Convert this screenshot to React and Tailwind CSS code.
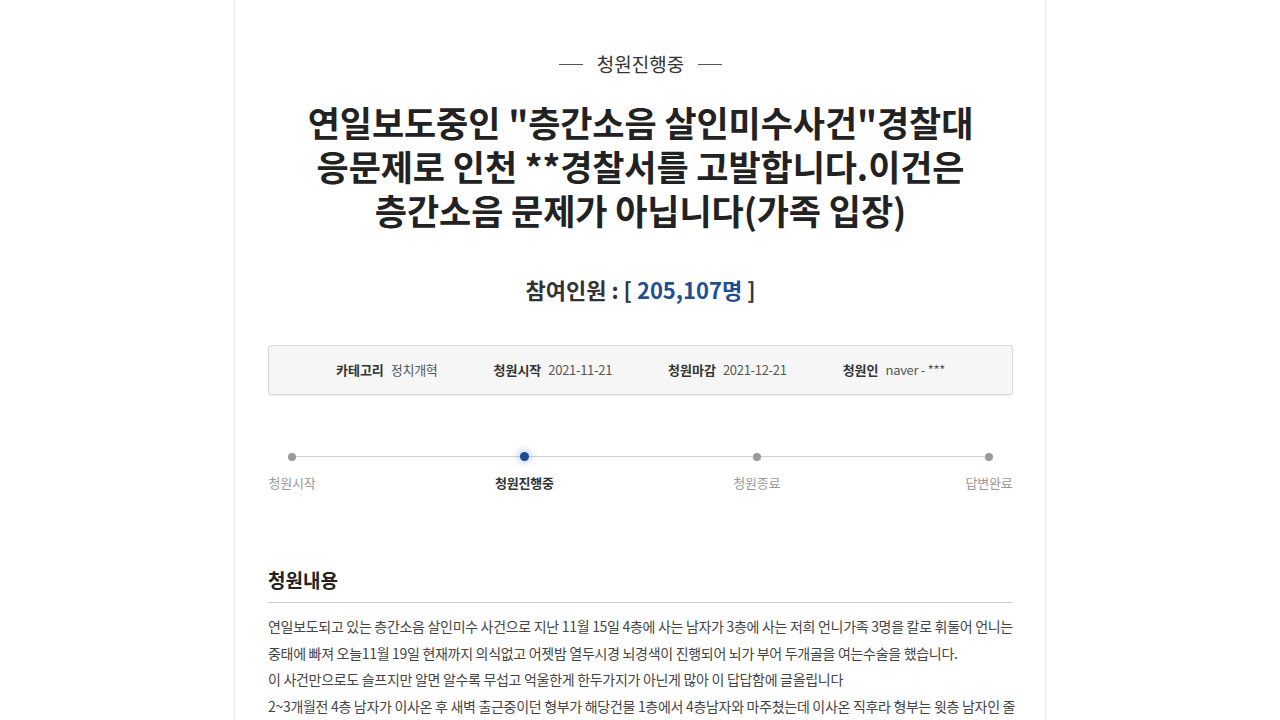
import React from "react";

const info = [
  { label: "카테고리", value: "정치개혁" },
  { label: "청원시작", value: "2021-11-21" },
  { label: "청원마감", value: "2021-12-21" },
  { label: "청원인", value: "naver - ***" },
];

const steps = [
  { label: "청원시작", active: false },
  { label: "청원진행중", active: true },
  { label: "청원종료", active: false },
  { label: "답변완료", active: false },
];

const body = [
  "연일보도되고 있는 층간소음 살인미수 사건으로 지난 11월 15일 4층에 사는 남자가 3층에 사는 저희 언니가족 3명을 칼로 휘둘어 언니는",
  "중태에 빠져 오늘11월 19일 현재까지 의식없고 어젯밤 열두시경 뇌경색이 진행되어 뇌가 부어 두개골을 여는수술을 했습니다.",
  "이 사건만으로도 슬프지만 알면 알수록 무섭고 억울한게 한두가지가 아닌게 많아 이 답답함에 글올립니다",
  "2~3개월전 4층 남자가 이사온 후 새벽 출근중이던 형부가 해당건물 1층에서 4층남자와 마주쳤는데 이사온 직후라 형부는 윗층 남자인 줄",
];

export default function App() {
  return (
    <div className="h-[720px] overflow-hidden bg-white font-['Noto_Sans_CJK_KR',sans-serif]">
      <div className="mx-auto w-[812px] min-h-[720px] border-x border-[#e8e8e8] pl-[33px] pr-[32px] pt-[49px]">
        {/* status */}
        <div className="flex items-center justify-center gap-[14px] text-[19px] leading-[30px] text-[#333]">
          <span className="h-px w-[24px] bg-[#555]"></span>
          <span>청원진행중</span>
          <span className="h-px w-[24px] bg-[#555]"></span>
        </div>

        {/* title */}
        <h1 className="mt-[21px] text-center text-[35px] font-bold leading-[44px] tracking-[-0.1px] text-[#222]">
          연일보도중인 "층간소음 살인미수사건"경찰대
          <br />
          응문제로 인천 **경찰서를 고발합니다.이건은
          <br />
          층간소음 문제가 아닙니다(가족 입장)
        </h1>

        {/* count */}
        <div className="mt-[41px] text-center text-[22px] font-bold leading-[32px] text-[#333]">
          참여인원 : [ <span className="text-[#1f4f8f]">205,107명</span> ]
        </div>

        {/* info box */}
        <div className="mt-[40px] flex h-[50px] items-center justify-center gap-[56px] rounded-[3px] border border-[#d8d8d8] bg-[#f6f6f6] text-[13px] shadow-[0_1px_2px_rgba(0,0,0,0.08)]">
          {info.map((item, i) => (
            <div key={i} className="flex items-center gap-[7px] whitespace-nowrap">
              <span className="font-bold text-[#333]">{item.label}</span>
              <span className="text-[#555] tracking-[-0.3px]">{item.value}</span>
            </div>
          ))}
        </div>

        {/* progress */}
        <div className="relative mt-[57px] flex justify-between">
          <div className="absolute left-[24px] right-[24px] top-[4px] h-px bg-[#d0d0d0]"></div>
          {steps.map((s, i) => (
            <div key={i} className="relative flex w-[48px] flex-col items-center">
              {s.active ? (
                <span className="h-[9px] w-[9px] rounded-full bg-[#1b4b8e] shadow-[0_0_6px_3px_rgba(60,120,220,0.25)]"></span>
              ) : (
                <span className="mt-[0.5px] h-[8px] w-[8px] rounded-full bg-[#9a9a9a]"></span>
              )}
              <span
                className={
                  s.active
                    ? "mt-[12px] whitespace-nowrap text-[13px] font-bold leading-[20px] tracking-[-0.2px] text-[#333]"
                    : "mt-[12px] whitespace-nowrap text-[13px] leading-[20px] tracking-[-0.2px] text-[#999]"
                }
              >
                {s.label}
              </span>
            </div>
          ))}
        </div>

        {/* content */}
        <div className="mt-[74px]">
          <h2 className="border-b border-[#cfcfcf] pb-[9px] text-[19px] font-bold leading-[26px] text-[#222]">
            청원내용
          </h2>
          <div className="mt-[10px] text-[14px] leading-[26.7px] tracking-[-0.3px] text-[#444]">
            {body.map((line, i) => (
              <div key={i} className="whitespace-nowrap">
                {line}
              </div>
            ))}
          </div>
        </div>
      </div>
    </div>
  );
}
